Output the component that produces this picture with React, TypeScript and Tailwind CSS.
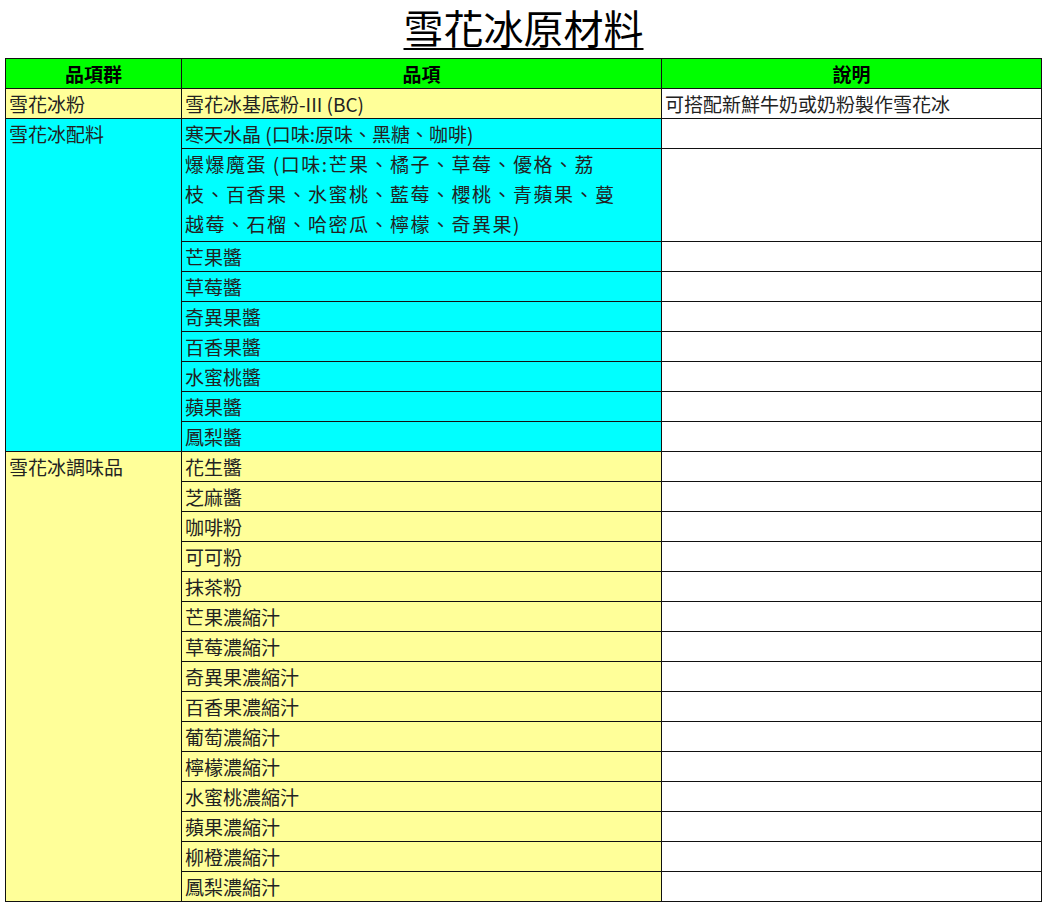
const f = { fontFamily: '"Noto Sans CJK TC", "Noto Sans", sans-serif' };
const g2 = ["芒果醬","草莓醬","奇異果醬","百香果醬","水蜜桃醬","蘋果醬","鳳梨醬"];
const g3 = ["花生醬","芝麻醬","咖啡粉","可可粉","抹茶粉","芒果濃縮汁","草莓濃縮汁","奇異果濃縮汁","百香果濃縮汁","葡萄濃縮汁","檸檬濃縮汁","水蜜桃濃縮汁","蘋果濃縮汁","柳橙濃縮汁","鳳梨濃縮汁"];
const td = "border border-[#111] px-[3px] h-[30px] py-0 text-[19px] leading-[29px] text-[#222] align-top whitespace-nowrap overflow-hidden";
export default function App() {
  return (
    <div className="bg-white w-[1045px] h-[905px] overflow-hidden" style={f}>
      <div className="h-[58px] flex justify-center items-start">
        <h1 className="text-[40px] leading-[54px] underline underline-offset-[4px] decoration-[2px] text-black pl-[2px]">雪花冰原材料</h1>
      </div>
      <table className="ml-[5px] w-[1036px] border-collapse table-fixed">
        <colgroup><col className="w-[176px]" /><col className="w-[480px]" /><col className="w-[380px]" /></colgroup>
        <tbody>
          <tr className="bg-[#00ff00]">
            <td className={td + " text-center font-bold text-black"}>品項群</td>
            <td className={td + " text-center font-bold text-black"}>品項</td>
            <td className={td + " text-center font-bold text-black"}>說明</td>
          </tr>
          <tr>
            <td className={td + " bg-[#ffff99]"}>雪花冰粉</td>
            <td className={td + " bg-[#ffff99]"}>雪花冰基底粉-III (BC)</td>
            <td className={td}>可搭配新鮮牛奶或奶粉製作雪花冰</td>
          </tr>
          <tr>
            <td rowSpan={9} className={td + " bg-[#00ffff]"}>雪花冰配料</td>
            <td className={td + " bg-[#00ffff]"}>寒天水晶 (口味:原味、黑糖、咖啡)</td>
            <td className={td}></td>
          </tr>
          <tr>
            <td className={td + " bg-[#00ffff] h-[93px] leading-[30px] tracking-[1.5px]"}>爆爆魔蛋 (口味:芒果、橘子、草莓、優格、荔<br />枝、百香果、水蜜桃、藍莓、櫻桃、青蘋果、蔓<br />越莓、石榴、哈密瓜、檸檬、奇異果)</td>
            <td className={td}></td>
          </tr>
          {g2.map(x => (
            <tr key={x}><td className={td + " bg-[#00ffff]"}>{x}</td><td className={td}></td></tr>
          ))}
          {g3.map((x, i) => (
            <tr key={x}>
              {i === 0 && <td rowSpan={15} className={td + " bg-[#ffff99]"}>雪花冰調味品</td>}
              <td className={td + " bg-[#ffff99]"}>{x}</td><td className={td}></td>
            </tr>
          ))}
        </tbody>
      </table>
    </div>
  );
}
